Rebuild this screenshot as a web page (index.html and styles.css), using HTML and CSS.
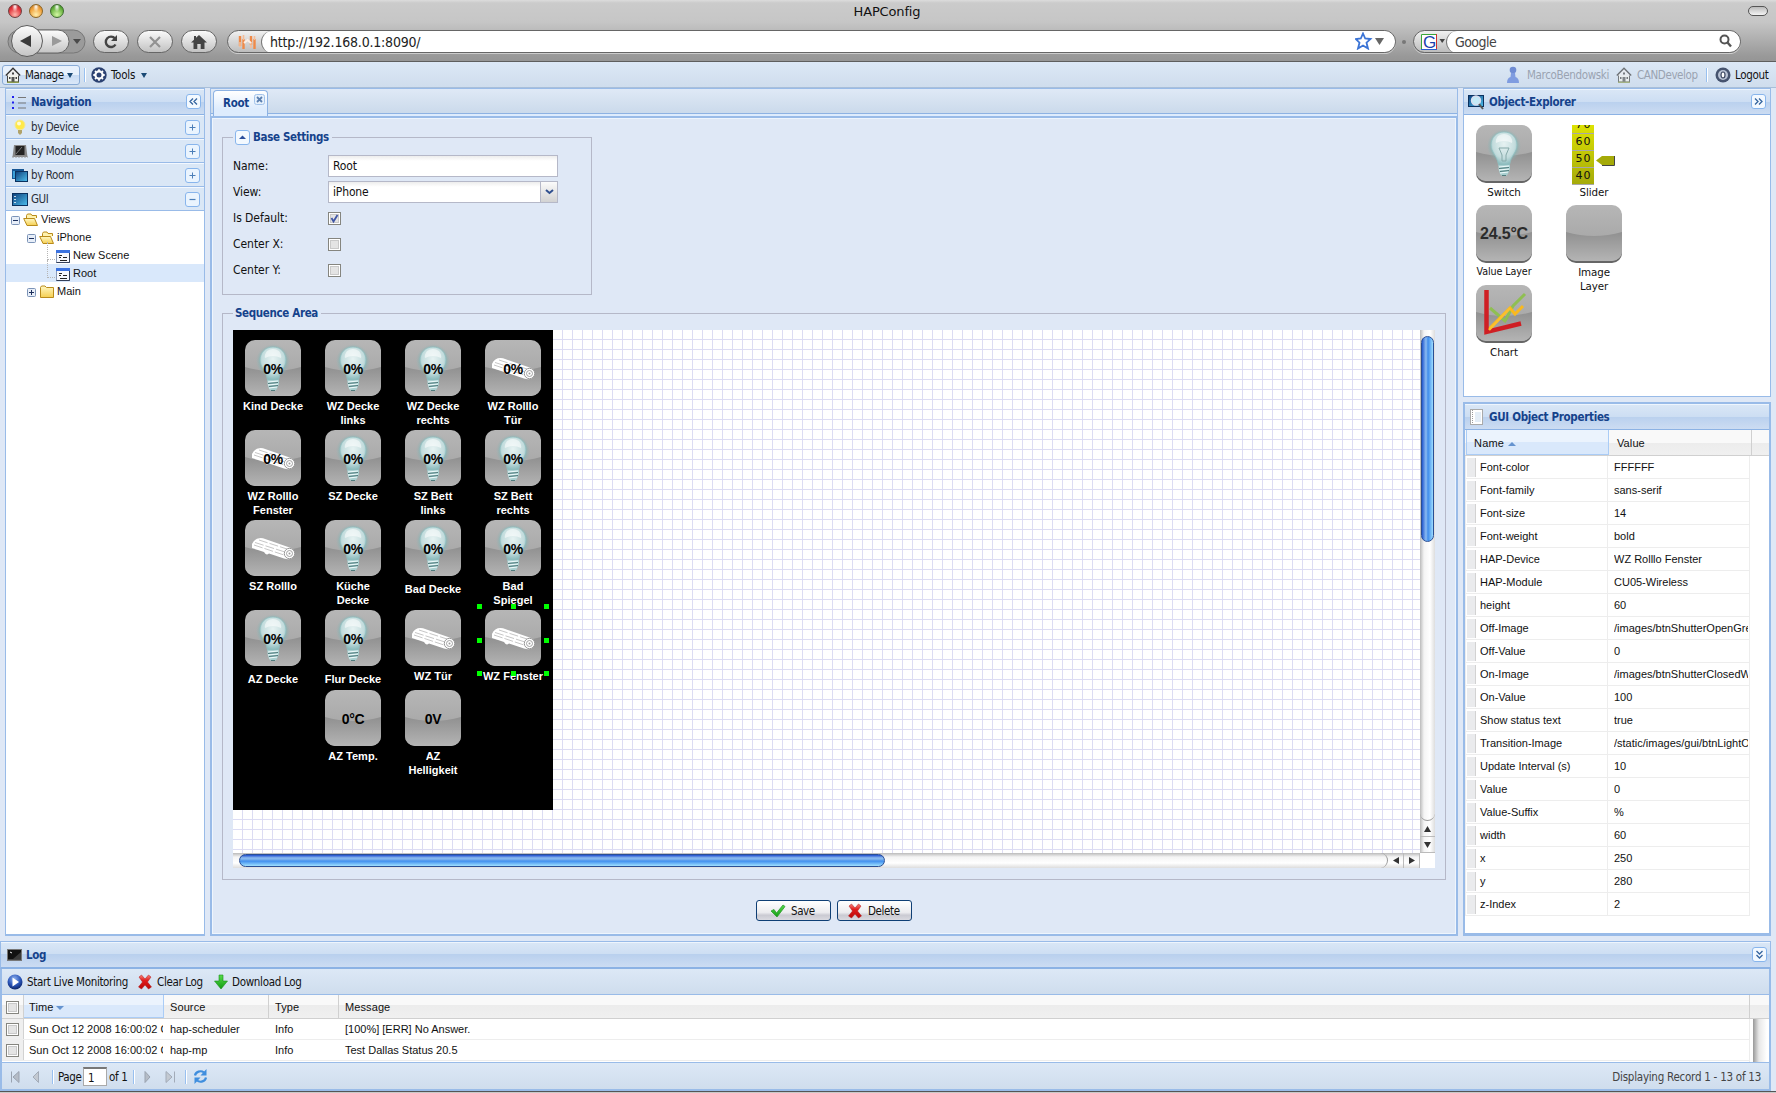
FILE: index.html
```html
<!DOCTYPE html>
<html lang="en">
<head>
<meta charset="utf-8">
<title>HAPConfig</title>
<link rel="stylesheet" href="styles.css">
</head>
<body>
<svg class="defs" width="0" height="0" aria-hidden="true">
  <defs>
    <linearGradient id="gTile" x1="0" y1="0" x2="0" y2="1"><stop offset="0" stop-color="#b6b6b6"/><stop offset="1" stop-color="#a0a0a0"/></linearGradient>
    <linearGradient id="gTileLow" x1="0" y1="0" x2="0" y2="1"><stop offset="0" stop-color="#909090"/><stop offset="1" stop-color="#b4b4b4"/></linearGradient>
    <radialGradient id="gBulb" cx=".5" cy=".35" r=".6"><stop offset="0" stop-color="#e6f2f2"/><stop offset=".7" stop-color="#c3dcdd"/><stop offset="1" stop-color="#8dbcbe"/></radialGradient>
    <radialGradient id="gGlow"><stop offset=".7" stop-color="#7fb5b5" stop-opacity=".75"/><stop offset="1" stop-color="#8ab5b5" stop-opacity="0"/></radialGradient>
    <linearGradient id="gFolder" x1="0" y1="0" x2="0" y2="1"><stop offset="0" stop-color="#fff8c4"/><stop offset="1" stop-color="#f5cf52"/></linearGradient>
    <linearGradient id="gScreen" x1="0" y1="0" x2="1" y2="1"><stop offset="0" stop-color="#0c3f7c"/><stop offset="1" stop-color="#4fc0ee"/></linearGradient>
    <radialGradient id="gBall" cx=".45" cy=".3" r=".7"><stop offset="0" stop-color="#8fb2ef"/><stop offset=".6" stop-color="#2a55b8"/><stop offset="1" stop-color="#0c2468"/></radialGradient>
    <linearGradient id="gRed" x1="0" y1="0" x2="0" y2="1"><stop offset="0" stop-color="#f7837b"/><stop offset=".4" stop-color="#e01b1b"/><stop offset="1" stop-color="#b90808"/></linearGradient>
    <linearGradient id="gGreen" x1="0" y1="0" x2="0" y2="1"><stop offset="0" stop-color="#57dd4b"/><stop offset="1" stop-color="#119a12"/></linearGradient>
  </defs>
  <symbol id="tile" viewBox="0 0 56 56"><rect width="56" height="56" rx="10" fill="url(#gTile)"/><path d="M0 27Q28 35 56 27V46A10 10 0 0 1 46 56H10A10 10 0 0 1 0 46Z" fill="url(#gTileLow)"/></symbol>
  <symbol id="bulb" viewBox="0 0 56 56">
    <circle cx="28" cy="21" r="17" fill="url(#gGlow)"/>
    <path d="M28 7C20 7 15 13 15 20C15 27 21 31 22 38L23 41H33L34 38C35 31 41 27 41 20C41 13 36 7 28 7Z" fill="url(#gBulb)" stroke="#8fbfc0" stroke-width=".8"/>
    <path d="M22 11Q28 7 34 11Q37 15 36 18Q28 14 20 18Q19 15 22 11Z" fill="#fff" opacity=".55"/>
    <path d="M22.500 40H34V44L32 49L30 51H26L24 49L22.500 44Z" fill="#a9cfd0"/>
    <path d="M23 42L33 41M23 45L33 44M24 48L32 47" stroke="#eefafa" stroke-width="1.200"/><path d="M23 43.500L33 42.500M24 46.500L33 45.500M26 50.500H30" stroke="#507b7c" stroke-width="1"/>
  </symbol>
  <symbol id="shutter" viewBox="0 0 56 56">
    <path d="M7 24Q10 17 18 18.300L46 28Q50 30 49 35Q47 41 39 38.500L24 33.500Q21 36 19 32L7 28Z" fill="#fff"/>
    <path d="M9 25L39 35M10 22.500L40 32M14 20L42 29" stroke="#a0a0a0" stroke-width=".6" stroke-dasharray="9 2"/>
    <circle cx="44.500" cy="33.500" r="5.200" fill="#fff" stroke="#999" stroke-width="1"/><circle cx="44.500" cy="33.500" r="3" fill="none" stroke="#999" stroke-width=".9"/><circle cx="44.500" cy="33.500" r="1" fill="#999"/>
  </symbol>
  <symbol id="house" viewBox="0 0 16 16"><path d="M2.500 8V15H13.500V8" fill="#f4f4ec" stroke="#444" /><path d="M.8 8.500L8 1.200L15.200 8.500" fill="#eee" stroke="#333" stroke-width="1.300"/><path d="M6.500 15V10H9.500V15Z" fill="#555"/><path d="M7 5.500H9V7.500H7ZM4 10H5.500V12H4ZM10.500 10H12V12H10.500Z" fill="#444"/><path d="M2 15.300H14" stroke="#8a9a42" stroke-width="1.200"/></symbol>
  <symbol id="gear" viewBox="0 0 16 16"><circle cx="8" cy="8" r="7.700" fill="#2c4272"/><circle cx="8" cy="8" r="3.600" fill="none" stroke="#fff" stroke-width="2.200"/><g stroke="#fff" stroke-width="1.800"><path d="M8 2.300V4M8 12V13.700M2.300 8H4M12 8H13.700M4 4L5 5M11 11L12 12M12 4L11 5M5 11L4 12"/></g></symbol>
  <symbol id="expP" viewBox="0 0 9 9"><rect x=".5" y=".5" width="8" height="8" rx="1" fill="#e7eef8" stroke="#7b93b7"/><path d="M2 4.500H7M4.500 2V7" stroke="#1c2f5c"/></symbol>
  <symbol id="expM" viewBox="0 0 9 9"><rect x=".5" y=".5" width="8" height="8" rx="1" fill="#e7eef8" stroke="#7b93b7"/><path d="M2 4.500H7" stroke="#1c2f5c"/></symbol>
  <symbol id="folderO" viewBox="0 0 16 14"><path d="M3.500 11V2.500L4.500 1H8L9 2.500H13.500V5" fill="#fff2ae" stroke="#b98b1b"/><path d="M.7 5.500H11.500L14.500 12.500H4Z" fill="url(#gFolder)" stroke="#b98b1b"/></symbol>
  <symbol id="folder" viewBox="0 0 16 14"><path d="M1.500 12.500V2.500L2.500 1H6L7.500 2.500H14.500V12.500Z" fill="url(#gFolder)" stroke="#b98b1b"/></symbol>
  <symbol id="page" viewBox="0 0 14 13"><rect x=".5" y=".5" width="13" height="12" fill="#f6f8fd" stroke="#8a9ab8"/><path d="M0 0H14V3H0Z" fill="#3b72e0"/><path d="M.5 12.500H13.500V3" fill="none" stroke="#333f58"/><path d="M3 5.500H6M7 7.500H11M3 7.500H5M4 10.500H11" stroke="#222"/></symbol>
  <symbol id="screen" viewBox="0 0 16 14"><rect width="12" height="10" x="0" y="1" fill="#175694"/><path d="M1 3H3V10H1Z" fill="#3ba0d8"/><rect x="3.500" y="3.500" width="12" height="10" fill="url(#gScreen)" stroke="#0b315f"/></symbol>
  <symbol id="cross" viewBox="0 0 16 16"><path d="M2 3L4.500 1L8 5L11.500 1L14 3L10.500 8L14.500 13L11.500 15L8 11L4.500 15L1.500 13L5.500 8Z" fill="url(#gRed)" stroke="#b11616" stroke-width=".5"/></symbol>
  <symbol id="cb" viewBox="0 0 13 13"><rect x=".5" y=".5" width="12" height="12" fill="#fff" stroke="#85857f"/><rect x="2.500" y="2.500" width="8" height="8" fill="#e4e4e4" stroke="#c9c9c9"/></symbol>
  <symbol id="plus" viewBox="0 0 15 15"><rect x=".5" y=".5" width="14" height="14" rx="2.500" fill="#eaf4fe" stroke="#88b5ec"/><path d="M4.500 7.500H10.500M7.500 4.500V10.500" stroke="#4b7eb8"/></symbol>
  <symbol id="minus" viewBox="0 0 15 15"><rect x=".5" y=".5" width="14" height="14" rx="2.500" fill="#eaf4fe" stroke="#88b5ec"/><path d="M4.500 7.500H10.500" stroke="#4b7eb8" stroke-width="1.200"/></symbol>
  <symbol id="chev" viewBox="0 0 15 15"><rect x=".5" y=".5" width="14" height="14" rx="2.500" fill="#f3f9ff" stroke="#88b5ec"/><path d="M7 4.500L4 7.500L7 10.500M11 4.500L8 7.500L11 10.500" fill="none" stroke="#35659f" stroke-width="1.300"/></symbol>
</svg>

<header class="chrome">
  <div class="titlebar"><span class="lights"><i class="red"></i><i class="amber"></i><i class="green"></i></span><span class="title">HAPConfig</span><i class="pill"></i></div>
  <div class="nav">
    <svg class="backfwd" width="80" height="34" viewBox="0 0 80 34">
      <defs><linearGradient id="gBtn" x1="0" y1="0" x2="0" y2="1"><stop offset="0" stop-color="#fdfdfd"/><stop offset="1" stop-color="#c4c4c4"/></linearGradient></defs>
      <rect x="1" y="6" width="77" height="23" rx="11.500" fill="#9b9b9b" stroke="#777"/>
      <path d="M30 6H51A11 11.500 0 0 1 51 29H30Z" fill="url(#gBtn)" stroke="#666"/>
      <circle cx="20" cy="17" r="15.500" fill="url(#gBtn)" stroke="#5b5b5b"/>
      <path d="M13 17L24 11V23Z" fill="#3b3b3b"/><path d="M55 17L45 12V22Z" fill="#9a9a9a"/><path d="M66 15H74L70 20Z" fill="#4a4a4a"/>
    </svg>
    <span class="btn"><svg width="16" height="16" viewBox="0 0 16 16"><path d="M12.500 10.500A5.200 5.200 0 1 1 12 4.500" fill="none" stroke="#444" stroke-width="2.400"/><path d="M14 1V7H8Z" fill="#444"/></svg></span>
    <span class="btn"><svg width="14" height="14" viewBox="0 0 14 14"><path d="M2 2L12 12M12 2L2 12" stroke="#929292" stroke-width="2.200"/></svg></span>
    <span class="btn"><svg width="16" height="14" viewBox="0 0 16 14"><path d="M8 0L16 7.500H13.500V14H9.700V9H6.300V14H2.500V7.500H0L3 4.700V1H5V2.800Z" fill="#444"/></svg></span>
    <div class="urlbar">
      <svg class="fav" width="33" height="22" viewBox="0 0 33 22"><path d="M12 5V15M15.500 8V18M23 5V14M26.500 8V18" stroke="#f08a48" stroke-width="2.400"/><path d="M12 11V16M23 11V17M15.500 4V9M26.500 5V9" stroke="#f6bd98" stroke-width="1.600"/><path d="M16 12L19.500 9L23 12" fill="none" stroke="#fbeee5" stroke-width="2"/></svg>
      <span class="field">http://192.168.0.1:8090/</span>
      <svg class="star" width="32" height="18" viewBox="0 0 32 18"><path d="M8 1.500L10.200 6.500L15.500 7L11.500 10.700L13 16.500L8 13.500L3 16.500L4.500 10.700L.7 7L5.800 6.500Z" fill="#fff" stroke="#3b74d6" stroke-width="1.800"/><path d="M20 6H29L24.500 13Z" fill="#666"/></svg>
    </div>
    <i class="dot"></i>
    <div class="search">
      <svg width="32" height="22" viewBox="0 0 32 22"><path d="M7 3H23V19H7Z" fill="#fff"/><path d="M7.500 19V3.500H23" fill="none" stroke="#3aa63a"/><path d="M22.500 3V18.500" stroke="#d23030"/><path d="M7 18.500H23" stroke="#2c5fd0"/><text x="9" y="17" class="g">G</text><path d="M25.500 8H31L28.200 12Z" fill="#444"/></svg>
      <span class="field">Google</span>
      <svg class="mag" width="14" height="14" viewBox="0 0 14 14"><circle cx="5.500" cy="5.500" r="4" fill="none" stroke="#555" stroke-width="2"/><path d="M8.500 8.500L12 12.500" stroke="#555" stroke-width="2.400"/></svg>
    </div>
  </div>
</header>

<div class="appbar">
  <span class="manage"><svg width="16" height="16"><use href="#house"/></svg><b>Manage</b><i class="caret"></i></span>
  <i class="sep"></i>
  <span class="tools"><svg width="16" height="16"><use href="#gear"/></svg><b>Tools</b><i class="caret"></i></span>
  <span class="user"><svg width="14" height="18" viewBox="0 0 14 18"><circle cx="7" cy="4" r="3.300" fill="#6f8cd3"/><path d="M5 7H9L9.500 11Q13 12 13 17H1Q1 12 4.500 11Z" fill="#7f9ce0"/></svg><span class="dim nm">MarcoBendowski</span><svg class="faded" width="16" height="16"><use href="#house"/></svg><span class="dim org">CANDevelop</span><i class="sep"></i><svg width="16" height="16" viewBox="0 0 16 16"><circle cx="8" cy="8" r="7.500" fill="#46536f"/><circle cx="8" cy="8" r="5" fill="#b9c2d4"/><ellipse cx="8" cy="8" rx="2" ry="3" fill="#fff" stroke="#39445e" stroke-width="1.200"/></svg><span class="lo">Logout</span></span>
</div>

<main class="main">
  <aside class="side">
    <div class="phead"><svg class="hi" width="16" height="15" viewBox="0 0 16 15"><path d="M1 2H3M1 7.500H3M1 13H3" stroke="#2020ee" stroke-width="2"/><path d="M7 2.500H15M7 8H15M7 13H15" stroke="#777"/></svg><h2>Navigation</h2><svg class="tool" width="15" height="15"><use href="#chev"/></svg></div>
    <div class="acc"><svg width="16" height="16" viewBox="0 0 16 16"><circle cx="8" cy="6" r="5" fill="#ffe94a" stroke="#f1e79b"/><circle cx="7" cy="4.500" r="2" fill="#fffbd0"/><path d="M6 11H10V14L8 16L6 14Z" fill="#b1a36a"/></svg><span>by Device</span><svg class="tool" width="15" height="15"><use href="#plus"/></svg></div>
    <div class="acc"><svg width="16" height="16" viewBox="0 0 16 16"><path d="M2 2H14L15.500 14H.5Z" fill="#888"/><path d="M3.500 3H12.500V12H3.500Z" fill="#222"/><path d="M4 11L10 4" stroke="#777"/><path d="M0 14H16" stroke="#999" stroke-dasharray="2 1"/></svg><span>by Module</span><svg class="tool" width="15" height="15"><use href="#plus"/></svg></div>
    <div class="acc"><svg width="16" height="14"><use href="#screen"/></svg><span>by Room</span><svg class="tool" width="15" height="15"><use href="#plus"/></svg></div>
    <div class="acc"><svg width="16" height="14" viewBox="0 0 16 14"><rect x=".5" y="1.500" width="15" height="12" fill="url(#gScreen)" stroke="#0b315f"/><path d="M3 4V5M3 7V8M3 10V11" stroke="#fff" stroke-width="1.500"/></svg><span>GUI</span><svg class="tool" width="15" height="15"><use href="#minus"/></svg></div>
    <div class="tree">
      <div class="node"><svg width="9" height="9"><use href="#expM"/></svg><svg class="ic" width="16" height="14"><use href="#folderO"/></svg>Views</div>
      <div class="node l1"><svg width="9" height="9"><use href="#expM"/></svg><svg class="ic" width="16" height="14"><use href="#folderO"/></svg>iPhone</div>
      <div class="node l2"><i></i><svg width="14" height="13"><use href="#page"/></svg>New Scene</div>
      <div class="node l2 sel"><i></i><svg width="14" height="13"><use href="#page"/></svg>Root</div>
      <div class="node l1"><svg width="9" height="9"><use href="#expP"/></svg><svg class="ic" width="16" height="14"><use href="#folder"/></svg>Main</div>
    </div>
  </aside>

  <section class="center">
    <div class="tabs"><div class="tab">Root<svg width="11" height="11" viewBox="0 0 11 11"><rect x=".5" y=".5" width="10" height="10" rx="2" fill="#e6f0fb" stroke="#a3c3ea"/><path d="M3 3L8 8M8 3L3 8" stroke="#5a7fb0" stroke-width="1.800"/></svg></div></div>
    <div class="cbody">
      <fieldset class="base">
        <legend><svg width="15" height="15" viewBox="0 0 15 15"><rect x=".5" y=".5" width="14" height="14" rx="2.500" fill="#f3f9ff" stroke="#88b5ec"/><path d="M4 9H11L7.500 5.500Z" fill="#2a4f9c"/></svg><span>Base Settings</span></legend>
        <div class="row"><label>Name:</label><span class="inp">Root</span></div>
        <div class="row"><label>View:</label><span class="inp combo">iPhone<span class="trig"><svg width="9" height="6" viewBox="0 0 9 6"><path d="M1 1L4.500 4L8 1" fill="none" stroke="#2f4f8f" stroke-width="2"/></svg></span></span></div>
        <div class="row"><label>Is Default:</label><svg width="13" height="13" viewBox="0 0 13 13"><use href="#cb"/><path d="M3.500 6L5.500 9.500L9.500 3" fill="none" stroke="#3f55a5" stroke-width="1.800"/></svg></div>
        <div class="row"><label>Center X:</label><svg width="13" height="13"><use href="#cb"/></svg></div>
        <div class="row"><label>Center Y:</label><svg width="13" height="13"><use href="#cb"/></svg></div>
      </fieldset>
      <fieldset class="seq">
        <legend><span>Sequence Area</span></legend>
        <div class="scroller">
          <div class="canvas"><div class="phone">
            <div class="obj c1 r1"><svg><use href="#tile"/><use href="#bulb"/></svg><b>0%</b><p>Kind Decke</p></div>
            <div class="obj c2 r1"><svg><use href="#tile"/><use href="#bulb"/></svg><b>0%</b><p>WZ Decke<br>links</p></div>
            <div class="obj c3 r1"><svg><use href="#tile"/><use href="#bulb"/></svg><b>0%</b><p>WZ Decke<br>rechts</p></div>
            <div class="obj c4 r1"><svg><use href="#tile"/><use href="#shutter"/></svg><b>0%</b><p>WZ Rolllo<br>Tür</p></div>
            <div class="obj c1 r2"><svg><use href="#tile"/><use href="#shutter"/></svg><b>0%</b><p>WZ Rolllo<br>Fenster</p></div>
            <div class="obj c2 r2"><svg><use href="#tile"/><use href="#bulb"/></svg><b>0%</b><p>SZ Decke</p></div>
            <div class="obj c3 r2"><svg><use href="#tile"/><use href="#bulb"/></svg><b>0%</b><p>SZ Bett<br>links</p></div>
            <div class="obj c4 r2"><svg><use href="#tile"/><use href="#bulb"/></svg><b>0%</b><p>SZ Bett<br>rechts</p></div>
            <div class="obj c1 r3"><svg><use href="#tile"/><use href="#shutter"/></svg><p>SZ Rolllo</p></div>
            <div class="obj c2 r3"><svg><use href="#tile"/><use href="#bulb"/></svg><b>0%</b><p>Küche<br>Decke</p></div>
            <div class="obj c3 r3 low"><svg><use href="#tile"/><use href="#bulb"/></svg><b>0%</b><p>Bad Decke</p></div>
            <div class="obj c4 r3"><svg><use href="#tile"/><use href="#bulb"/></svg><b>0%</b><p>Bad<br>Spiegel</p></div>
            <div class="obj c1 r4 low"><svg><use href="#tile"/><use href="#bulb"/></svg><b>0%</b><p>AZ Decke</p></div>
            <div class="obj c2 r4 low"><svg><use href="#tile"/><use href="#bulb"/></svg><b>0%</b><p>Flur Decke</p></div>
            <div class="obj c3 r4"><svg><use href="#tile"/><use href="#shutter"/></svg><p>WZ Tür</p></div>
            <div class="obj c4 r4"><svg><use href="#tile"/><use href="#shutter"/></svg><p>WZ Fenster</p></div>
            <div class="obj c2 r5"><svg><use href="#tile"/></svg><b>0°C</b><p>AZ Temp.</p></div>
            <div class="obj c3 r5"><svg><use href="#tile"/></svg><b>0V</b><p>AZ<br>Helligkeit</p></div>
            <svg class="handles" width="72" height="72" viewBox="0 0 72 72"><path d="M0 0H5V5H0ZM34 0H39V5H34ZM67 0H72V5H67ZM0 34H5V39H0ZM67 34H72V39H67ZM0 67H5V72H0ZM34 67H39V72H34ZM67 67H72V72H67Z" fill="#0f0"/></svg>
          </div></div>
          <div class="vbar"><div class="track"><i></i></div><span><svg width="7" height="6" viewBox="0 0 7 6"><path d="M0 6H7L3.500 0Z" fill="#333"/></svg></span><span><svg width="7" height="6" viewBox="0 0 7 6"><path d="M0 0H7L3.500 6Z" fill="#333"/></svg></span></div>
          <div class="hbar"><div class="track"><i></i></div><span><svg width="6" height="7" viewBox="0 0 6 7"><path d="M6 0V7L0 3.500Z" fill="#333"/></svg></span><span><svg width="6" height="7" viewBox="0 0 6 7"><path d="M0 0V7L6 3.500Z" fill="#333"/></svg></span></div>
        </div>
      </fieldset>
      <div class="buttons">
        <span class="xbtn save"><svg width="16" height="14" viewBox="0 0 16 14"><path d="M1 7L4 5.500L6.500 9L13 1L15 2.500L7 13Z" fill="url(#gGreen)" stroke="#2f9a2f" stroke-width=".8"/></svg>Save</span>
        <span class="xbtn"><svg width="16" height="16"><use href="#cross"/></svg>Delete</span>
      </div>
    </div>
  </section>

  <aside class="right">
    <div class="panel explorer">
      <div class="phead"><svg class="hi" width="17" height="16" viewBox="0 0 17 16"><rect x=".5" y="1.500" width="15" height="11" fill="url(#gScreen)" stroke="#0b315f"/><circle cx="8" cy="6.500" r="4.500" fill="#c4e9f7" stroke="#dde" stroke-width="1.400"/><path d="M11 10L15 15" stroke="#555" stroke-width="2"/></svg><h2>Object-Explorer</h2><svg class="tool flip" width="15" height="15"><use href="#chev"/></svg></div>
      <div class="items">
        <div class="item"><svg class="t" viewBox="0 0 56 58"><rect y="2" width="56" height="56" rx="10" fill="#666"/><use href="#tile" width="56" height="56"/><use href="#bulb" width="56" height="56"/><path d="M23 23H33L30 30V36H26V30Z" fill="none" stroke="#86a9a9"/></svg><p>Switch</p></div>
        <div class="item"><div class="slider"><div class="scale"><span>70</span><span>60</span><span>50</span><span>40</span></div><svg width="21" height="12" viewBox="0 0 21 12"><path d="M1 5.500L7 1H19V10H7Z" fill="#a5aa08"/><path d="M7 10.500H19.500V1" fill="none" stroke="#444"/></svg></div><p>Slider</p></div>
        <div class="item"><svg class="t" viewBox="0 0 56 58"><rect y="2" width="56" height="56" rx="10" fill="#666"/><use href="#tile" width="56" height="56"/><text x="28" y="34" text-anchor="middle" class="temp">24.5°C</text></svg><p class="tight">Value Layer</p></div>
        <div class="item"><svg class="t" viewBox="0 0 56 58"><rect y="2" width="56" height="56" rx="10" fill="#666"/><use href="#tile" width="56" height="56"/></svg><p>Image<br>Layer</p></div>
        <div class="item"><svg class="t" viewBox="0 0 56 58"><rect y="2" width="56" height="56" rx="10" fill="#666"/><use href="#tile" width="56" height="56"/><path d="M14 23L29 36L37 21L49 9" fill="none" stroke="#8fbf52" stroke-width="3"/><path d="M12 45L34 23L39 29L47 21" fill="none" stroke="#f9b91e" stroke-width="3"/><path d="M10.500 5V47L45 38.500" fill="none" stroke="#cf1f24" stroke-width="4.500"/><path d="M13 45L34 23" stroke="#fbc02d" stroke-width="2.500"/></svg><p>Chart</p></div>
      </div>
    </div>
    <div class="panel props">
      <div class="phead"><svg class="hi" width="13" height="16" viewBox="0 0 13 16"><rect x=".5" y=".5" width="12" height="15" fill="#fff" stroke="#aaa"/><path d="M2.500 1V15" stroke="#999" stroke-dasharray="1 1"/><path d="M5 4H11M5 6H11M5 8H11M5 10H11M5 12H11" stroke="#c9dcef"/></svg><h2>GUI Object Properties</h2></div>
      <div class="ghead"><span class="h1">Name<i class="up"></i></span><span class="h2">Value</span></div>
      <div class="prow"><i></i><span>Font-color</span><em>FFFFFF</em></div>
      <div class="prow"><i></i><span>Font-family</span><em>sans-serif</em></div>
      <div class="prow"><i></i><span>Font-size</span><em>14</em></div>
      <div class="prow"><i></i><span>Font-weight</span><em>bold</em></div>
      <div class="prow"><i></i><span>HAP-Device</span><em>WZ Rolllo Fenster</em></div>
      <div class="prow"><i></i><span>HAP-Module</span><em>CU05-Wireless</em></div>
      <div class="prow"><i></i><span>height</span><em>60</em></div>
      <div class="prow"><i></i><span>Off-Image</span><em>/images/btnShutterOpenGre</em></div>
      <div class="prow"><i></i><span>Off-Value</span><em>0</em></div>
      <div class="prow"><i></i><span>On-Image</span><em>/images/btnShutterClosedW</em></div>
      <div class="prow"><i></i><span>On-Value</span><em>100</em></div>
      <div class="prow"><i></i><span>Show status text</span><em>true</em></div>
      <div class="prow"><i></i><span>Transition-Image</span><em>/static/images/gui/btnLightO</em></div>
      <div class="prow"><i></i><span>Update Interval (s)</span><em>10</em></div>
      <div class="prow"><i></i><span>Value</span><em>0</em></div>
      <div class="prow"><i></i><span>Value-Suffix</span><em>%</em></div>
      <div class="prow"><i></i><span>width</span><em>60</em></div>
      <div class="prow"><i></i><span>x</span><em>250</em></div>
      <div class="prow"><i></i><span>y</span><em>280</em></div>
      <div class="prow"><i></i><span>z-Index</span><em>2</em></div>
    </div>
  </aside>
</main>

<section class="log">
  <div class="phead"><svg class="hi" width="15" height="12" viewBox="0 0 15 12"><rect width="15" height="12" fill="#777"/><rect x="1" y="1" width="13" height="9.500" fill="#111"/><path d="M3 3L5 4" stroke="#eee"/><path d="M6 10L14 3V10Z" fill="#3a3a3a"/></svg><h2>Log</h2><svg class="tool down" width="15" height="15"><use href="#chev"/></svg></div>
  <div class="ltools">
    <svg width="16" height="16" viewBox="0 0 16 16"><circle cx="8" cy="8" r="7.500" fill="url(#gBall)"/><path d="M5.500 3.500L12 8L5.500 12.500Z" fill="#fff"/></svg><span class="a">Start Live Monitoring</span>
    <svg width="16" height="16"><use href="#cross"/></svg><span class="b">Clear Log</span>
    <svg width="14" height="16" viewBox="0 0 14 16"><path d="M5 1H9V7H13.500L7 15L.5 7H5Z" fill="url(#gGreen)" stroke="#188f18" stroke-width=".6"/></svg><span class="c">Download Log</span>
  </div>
  <div class="lhead"><span class="ck"><svg width="13" height="13"><use href="#cb"/></svg></span><span class="time">Time<i class="dn"></i></span><span>Source</span><span>Type</span><span>Message</span></div>
  <div class="lbody">
    <div class="rows">
      <div class="lrow"><span class="ck"><svg width="13" height="13"><use href="#cb"/></svg></span><span>Sun Oct 12 2008 16:00:02 G</span><span>hap-scheduler</span><span>Info</span><span>[100%] [ERR] No Answer.</span></div>
      <div class="lrow"><span class="ck"><svg width="13" height="13"><use href="#cb"/></svg></span><span>Sun Oct 12 2008 16:00:02 G</span><span>hap-mp</span><span>Info</span><span>Test Dallas Status 20.5</span></div>
    </div>
    <div class="lscroll"></div>
  </div>
  <div class="pager">
    <svg width="50" height="14" viewBox="0 0 50 14"><path d="M9.500 1.500V12.500M11 7L17 1.500V12.500Z" fill="#b5bcc6" stroke="#9aa3b0"/><path d="M31 7L36.500 1.500V12.500Z" fill="#c3c9d1" stroke="#a2abb8"/></svg>
    <i class="sep"></i><span class="pg">Page</span><span class="pin">1</span><span class="of">of 1</span><i class="sep"></i>
    <svg class="fw" width="51" height="14" viewBox="0 0 51 14"><path d="M16 7L11 1.500V12.500Z" fill="#b5bcc6" stroke="#9aa3b0"/><path d="M40.500 1.500V12.500M38 7L32 1.500V12.500Z" fill="#c3c9d1" stroke="#a2abb8"/></svg>
    <i class="sep"></i>
    <svg class="rf" width="15" height="15" viewBox="0 0 15 15"><path d="M2 6.500A5.500 5 0 0 1 11 3.500M13 8.500A5.500 5 0 0 1 4 11.500" fill="none" stroke="#3f8ede" stroke-width="2.200"/><path d="M13.500 0V6.500H7.500ZM1.500 15V8.500H7.500Z" fill="#3f8ede"/></svg>
    <span class="disp">Displaying Record 1 - 13 of 13</span>
  </div>
</section>
<div class="edge"></div>
</body>
</html>
```
FILE: styles.css
```css
* { box-sizing: border-box; }
body {
  margin: 0; width: 1776px; height: 1093px; overflow: hidden;
  display: grid; grid-template-rows: 62px 26px 853px 150px 2px;
  background: #dfe8f6; color: #111;
  font: 11.5px/16px "DejaVu Sans Condensed", "DejaVu Sans", sans-serif;
  font-stretch: condensed; letter-spacing: -.25px;
}
i, em { font-style: normal; }
h2, p { margin: 0; }
svg { display: block; flex: none; }
.defs { position: absolute; }

/* browser window */
.chrome { background: linear-gradient(#dcdcdc 0, #cbcbcb 3px, #c6c6c6 22px, #999 56px, #969696 60px); border-bottom: 1px solid #5e5e5e; }
.titlebar { height: 22px; display: flex; align-items: center; justify-content: space-between; padding: 0 8px; }
.lights { display: flex; gap: 7px; width: 120px; }
.lights i { width: 14px; height: 14px; border-radius: 50%; border: 1px solid #6e4040; background: radial-gradient(ellipse at 50% 15%, #fff 0, transparent 35%), radial-gradient(circle at 50% 80%, #ffb9ae, #e2343b 60%, #a3181d); }
.lights .amber { border-color: #8a6526; background: radial-gradient(ellipse at 50% 15%, #fff 0, transparent 35%), radial-gradient(circle at 50% 80%, #ffefae, #f0a03a 60%, #b06a18); }
.lights .green { border-color: #3d6b2e; background: radial-gradient(ellipse at 50% 15%, #fff 0, transparent 35%), radial-gradient(circle at 50% 80%, #d3f7a4, #69b340 60%, #2f7a1e); }
.title { font: 13px/22px "DejaVu Sans", sans-serif; letter-spacing: -.15px; margin-right: 2px; padding-top: 1px; }
.pill { width: 20px; height: 10px; margin-left: 100px; border: 1px solid #555; border-radius: 5px; background: linear-gradient(#bbb, #f4f4f4); }
.nav { height: 39px; display: flex; align-items: flex-start; padding: 8px 0 0 7px; }
.backfwd { margin-top: -6px; margin-right: 6px; }
.btn { width: 36px; height: 23px; margin-right: 8px; border: 1px solid #666; border-radius: 12px; background: linear-gradient(#fafafa, #c2c2c2); display: flex; align-items: center; justify-content: center; }
.urlbar, .search { height: 23px; border: 1px solid #666; border-radius: 12px; background: linear-gradient(#f0f0f0, #bdbdbd); display: flex; box-shadow: 0 1px 0 #ccc; overflow: hidden; }
.urlbar { width: 1169px; margin-left: 2px; position: relative; }
.field { flex: 1; height: 22px; background: #fff; border-radius: 11px; border-left: 1px solid #777; font-size: 14px; line-height: 22px; padding-left: 8px; letter-spacing: -.2px; color: #222; }
.urlbar .field { letter-spacing: -.2px; }
.star { position: absolute; right: 8px; top: 1px; }
.dot { width: 4px; height: 4px; border-radius: 2px; background: #777; margin: 10px 7px 0 6px; }
.search { width: 328px; position: relative; }
.search .field { color: #444; letter-spacing: -.55px; }
.mag { position: absolute; right: 7px; top: 3px; }
.g { font: 17px "Liberation Sans", sans-serif; fill: #1c3fae; }

/* application toolbar */
.appbar { display: flex; align-items: center; background: linear-gradient(#dce8f6, #cfdded); border-bottom: 1px solid #a9bfd9; padding: 1px 8px 0 2px; }
.appbar b { font-weight: 400; }
.manage { width: 78px; height: 20px; display: flex; align-items: center; border: 1px solid #89abd6; border-radius: 3px; padding-left: 2px; background: linear-gradient(#e8f1fc 50%, #c7daf3 50%, #dbe8f8); }
.manage b { width: 43px; padding-left: 4px; margin-right: 3px; letter-spacing: -.4px; }
.caret { border: solid transparent; border-width: 5px 3px 0; border-top-color: #1b4a75; }
.sep { width: 1px; height: 14px; background: #98c0f0; border-right: 0; box-shadow: 1px 0 0 #fff; flex: none; }
.appbar > .sep { margin: 0 6px 0 4px; }
.tools { display: flex; align-items: center; }
.tools b { width: 30px; margin-left: 4px; }
.user { margin-left: auto; display: flex; align-items: center; margin-right: -1px; }
.dim { color: #9aa3b1; }
.nm { width: 81px; margin: 0 8px 0 7px; letter-spacing: -.35px; }
.org { width: 60px; margin: 0 9px 0 5px; letter-spacing: -.4px; }
.faded { opacity: .65; }
.user .sep { margin-right: 8px; }
.lo { width: 34px; margin-left: 4px; letter-spacing: -.3px; }

.main { display: flex; padding: 0 5px; }
.phead { height: 27px; flex: none; display: flex; align-items: center; padding: 1px 4px 0 6px; border: 1px solid #99bbe8; border-bottom: 1px solid #8cb2e4; box-shadow: inset 0 1px 0 #eef5fd; background: linear-gradient(#dae7f6 0, #cddef3 50%, #b9d0ee 50%, #ccdcf2); }
.phead h2 { font: bold 11.5px/16px "DejaVu Sans Condensed", "DejaVu Sans", sans-serif; font-stretch: condensed; color: #15428b; letter-spacing: -.3px; margin-left: 4px; }
.tool { margin-left: auto; }
.phead .tool { margin-top: -1px; }
.flip { transform: scaleX(-1); }
.down { transform: rotate(-90deg); }

/* navigation */
.side { width: 200px; height: 848px; border: 1px solid #99bbe8; border-width: 0 1px 2px; background: #fff; }
.side .phead { border-width: 1px 0; padding-left: 5px; padding-right: 3px; }
.acc { height: 24px; display: flex; align-items: center; border-bottom: 1px solid #99bbe8; border-top: 1px solid #f3f8ff; background: #dae7f6; padding: 0 4px 0 6px; color: #2a2f38; }
.acc span { margin-left: 3px; letter-spacing: -.4px; }
.tree { font: 11px/18px "Liberation Sans", Arial, sans-serif; letter-spacing: 0; margin-top: -1px; }
.node { height: 18px; display: flex; align-items: center; padding-left: 5px; }
.node .ic { margin: 0 2px 0 3px; }
.node > svg { margin-top: 2px; }
.node .ic { margin-top: 2px; }
.node.l1 { padding-left: 21px; }
.node.l2 { padding-left: 25px; }
.l2 i { width: 8px; height: 18px; margin: -9px 0 0 16px; border: dotted #b5b5b5; border-width: 0 0 1px 1px; }
.node.l2 svg { margin: 2px 3px 0 1px; }
.sel { background: #d9e8fb; }

/* work area */
.center { width: 1248px; height: 848px; margin: 0 5px; border: 1px solid #99bbe8; border-bottom-width: 2px; display: flex; flex-direction: column; }
.tabs { height: 27px; padding: 1px 0 0 2px; background: linear-gradient(#dfe9f6, #cbdaeb 24px, #8db2e3 24px, #8db2e3 25px, #deecfd 25px); }
.tab { width: 55px; height: 26px; display: flex; padding: 4px 0 0 9px; border: 1px solid #8db2e3; border-bottom: 0; border-radius: 4px 4px 0 0; background: linear-gradient(#fff, #deecfd 18px); color: #15428b; font-weight: 700; letter-spacing: -.3px; }
.tab svg { margin: -1px 0 0 5px; }
.cbody { flex: 1; border: solid #99bbe8; border-width: 2px 1px 0; padding: 11px 10px 10px; display: flex; flex-direction: column; box-shadow: inset 0 0 0 1px #eef5fd; }
fieldset { margin: 0; border: 1px solid #b5b8c8; }
legend { height: 16px; padding: 0 3px 0 2px; display: flex; align-items: center; color: #15428b; font-weight: 700; letter-spacing: -.35px; }
.base { width: 370px; height: 166px; padding: 8px 10px 0 10px; }
.base legend span { margin-left: 3px; }
.row { height: 26px; display: flex; align-items: center; font-size: 12px; letter-spacing: 0; }
.row label { width: 95px; letter-spacing: -.05px; }
.inp { width: 230px; height: 22px; border: 1px solid #b5b8c8; background: linear-gradient(#ededed, #fff 5px); padding-left: 4px; line-height: 21px; letter-spacing: -.15px; }
.combo { display: flex; justify-content: space-between; }
.trig { width: 17px; border-left: 1px solid #b5b8c8; background: linear-gradient(#fbfbfb, #d2d2d2); display: flex; align-items: center; justify-content: center; }
.seq { width: 1224px; height: 575px; margin-top: 10px; padding: 9px 10px 0 10px; }
.scroller { width: 1202px; height: 538px; display: grid; grid-template: 523px 15px / 1187px 15px; background: #fff; }
.canvas { background: linear-gradient(transparent 9px, #dcdcf3 9px) 0 0/10px 10px, linear-gradient(90deg, #fff 9px, #dcdcf3 9px) 0 0/10px 10px; }
.phone { width: 320px; height: 480px; background: #000; position: relative; font-family: "Liberation Sans", Arial, sans-serif; font-stretch: normal; letter-spacing: 0; }
.obj { position: absolute; width: 80px; text-align: center; }
.obj svg { width: 56px; height: 56px; margin: 0 auto; }
.obj b { position: absolute; left: 0; right: 0; top: 21px; font-size: 14px; color: #000; letter-spacing: -.3px; }
.obj p { font-size: 11px; line-height: 14px; font-weight: 700; color: #fff; padding-top: 3px; white-space: nowrap; letter-spacing: .02px; }
.obj.low p { padding-top: 6px; }
.c1 { left: 0; } .c2 { left: 80px; } .c3 { left: 160px; } .c4 { left: 240px; }
.r1 { top: 10px; } .r2 { top: 100px; } .r3 { top: 190px; } .r4 { top: 280px; } .r5 { top: 360px; }
.handles { position: absolute; left: 244px; top: 274px; }
.vbar, .hbar { display: flex; }
.vbar { flex-direction: column; background: linear-gradient(90deg, #bbb, #f4f4f4 4px, #fff 10px, #ddd); }
.hbar { background: linear-gradient(#bbb, #f4f4f4 4px, #fff 10px, #ddd); }
.track { flex: 1; padding: 6px 1px; }
.hbar .track { padding: 1px 6px; }
.track i { display: block; border-radius: 7px; }
.vbar .track { border-bottom: 1px solid #999; border-radius: 0 0 8px 8px; }
.hbar .track { border-right: 1px solid #999; border-radius: 0 8px 8px 0; }
.vbar i { height: 206px; border: 1px solid #2a4f95; background: linear-gradient(90deg, #2358cf, #8cbcf2 4px, #3f8ceb 6px, #9cdcff 11px, #3a6fc0); }
.hbar i { width: 646px; height: 13px; border: 1px solid #2a4f95; background: linear-gradient(#1f4fd0, #8fbdf0 3px, #6ea9ec 5px, #3f8eee 6px, #9fe0ff 11px); }
.vbar span { height: 16px; border-bottom: 1px solid #bbb; display: flex; align-items: center; justify-content: center; }
.hbar span { width: 16px; border-right: 1px solid #bbb; display: flex; align-items: center; justify-content: center; }
.buttons { display: flex; justify-content: center; gap: 6px; padding: 20px 0 0 0; }
.xbtn { width: 75px; height: 21px; border: 1px solid #0f3f75; border-radius: 3px; background: linear-gradient(#fff 0, #ececef 60%, #cacad2 75%, #dadae0); display: flex; align-items: center; gap: 5px; padding: 1px 0 0 9px; font-size: 11.5px; letter-spacing: -.4px; }
.save { padding-left: 13px; }

/* right column */
.right { width: 308px; display: flex; flex-direction: column; gap: 5px; }
.panel { border: 1px solid #99bbe8; border-top: 0; background: #fff; }
.panel .phead { border-width: 1px 0; padding-left: 4px; }
.explorer { height: 309px; }
.items { display: grid; grid-template-columns: 90px 90px; grid-auto-rows: 80px; padding: 10px 0 0; margin-left: -5px; }
.item { text-align: center; font: 10.3px/14px "DejaVu Sans", sans-serif; letter-spacing: -.1px; }
.t { width: 56px; height: 58px; margin: 0 auto 2px; }
.tight { font-size: 9.6px; }
.temp { font: bold 16px "Liberation Sans", sans-serif; fill: #2b2b2b; letter-spacing: -.2px; }
.slider { height: 60px; display: flex; align-items: center; padding-left: 23px; gap: 1px; }
.scale { width: 22px; height: 60px; overflow: hidden; background: linear-gradient(#dde202, #a4a90a); display: flex; flex-direction: column; justify-content: flex-end; font: 11px/16px "DejaVu Sans", sans-serif; letter-spacing: 1px; }
.scale span { height: 17px; flex: none; border-bottom: 1px solid #a8a8a8; padding-left: 1px; }
.slider svg { margin-top: 11px; }
.props { height: 534px; border-width: 0 2px 3px 2px; font-family: "Liberation Sans", Arial, sans-serif; font-stretch: normal; letter-spacing: 0; font-size: 11px; }
.props .phead { border-top-width: 2px; height: 28px; padding-left: 5px; }
.props .phead h2 { margin-left: 6px; }
.ghead { height: 26px; display: flex; line-height: 26px; background: linear-gradient(#f9f9f9 50%, #ececec 50%, #f0f0f0); border-bottom: 1px solid #d0d0d0; }
.ghead .h1 { width: 143px; margin-left: 1px; padding-left: 7px; background: linear-gradient(#ebf3fd 50%, #d9e8fb 50%); border: solid #aaccf6; border-width: 0 1px 1px; letter-spacing: .2px; }
.ghead .h2 { width: 143px; padding-left: 8px; border-right: 1px solid #d0d0d0; letter-spacing: .1px; }
.up, .dn { display: inline-block; margin-left: 4px; border: solid transparent; border-width: 0 4px 4px; border-bottom-color: #6593cf; vertical-align: 1px; }
.dn { border-width: 4px 4px 0; border-top-color: #6593cf; margin-left: 3px; }
.prow { width: 285px; height: 23px; display: flex; align-items: center; border: solid #ededed; border-width: 0 1px 1px; }
.prow i { width: 9px; height: 19px; margin-left: 1px; background: #eaebed; border-right: 1px solid #d2d2d2; }
.prow span { width: 132px; height: 22px; line-height: 22px; padding-left: 4px; border-right: 1px solid #ededed; }
.prow em { flex: 1; line-height: 22px; margin-left: 6px; margin-right: 1px; overflow: hidden; white-space: nowrap; width: 0; }

/* log */
.log { width: 1771px; border: solid #99bbe8; border-width: 0 2px 2px 2px; display: flex; flex-direction: column; }
.log .phead { margin: 0 -2px; height: 28px; border-bottom-width: 2px; padding-right: 3px; }
.ltools { height: 26px; display: flex; align-items: center; padding-left: 5px; background: linear-gradient(#dce8f6, #cfdded); border-bottom: 1px solid #99bbe8; font-size: 11.5px; letter-spacing: -.35px; }
.a { width: 105px; margin: 0 5px 0 4px; }
.b { width: 52px; margin: 0 5px 0 4px; }
.c { margin-left: 4px; letter-spacing: -.3px; }
.lhead, .lrow { display: grid; grid-template-columns: 22px 140px 105px 70px 1411px; font: 11px/24px "Liberation Sans", Arial, sans-serif; letter-spacing: 0; }
.lhead { height: 24px; flex: none; background: linear-gradient(#f9f9f9 45%, #ececec 45%, #f0f0f0); border-bottom: 1px solid #d0d0d0; }
.lhead span { border-right: 1px solid #d0d0d0; padding-left: 6px; letter-spacing: .1px; height: 23px; }
.lhead .time { background: linear-gradient(#ebf3fd 45%, #d9e8fb 45%); border-color: #aaccf6; border-bottom: 1px solid #aaccf6; padding-left: 5px; }
.lhead .ck, .lrow .ck { padding: 6px 0 0 4px; }
.lbody { flex: 1; display: flex; background: #fff; overflow: hidden; }
.rows { width: 1748px; border-right: 1px solid #ededed; }
.lrow { height: 21px; line-height: 20px; border-bottom: 1px solid #ededed; }
.lrow span { overflow: hidden; white-space: nowrap; margin-right: 1px; padding-left: 6px; }
.lrow span:nth-child(2) { padding-left: 5px; }
.lrow .ck { margin: 0; background: #efefef; border-right: 1px solid #d2d2d2; padding-top: 4px; }
.lscroll { width: 14px; margin-left: 3px; background: linear-gradient(90deg, #999, #e8e8e8 6px, #fff); }
.pager { height: 27px; flex: none; display: flex; align-items: center; background: linear-gradient(#dce8f6, #cfdded); border-top: 1px solid #99bbe8; padding: 1px 8px 0 0; }
.pg { width: 25px; margin-left: 5px; letter-spacing: -.4px; }
.pin { width: 24px; height: 19px; border: 1px solid #aaa; border-top: 2px solid #777; background: #fff; padding-left: 4px; line-height: 18px; }
.of { width: 24px; margin-left: 2px; letter-spacing: -.3px; }
.rf { margin-left: 7px; }
.disp { margin-left: auto; color: #444; letter-spacing: -.25px; }
.edge { background: #c9c9c9; border-top: 1px solid #555; }
```
